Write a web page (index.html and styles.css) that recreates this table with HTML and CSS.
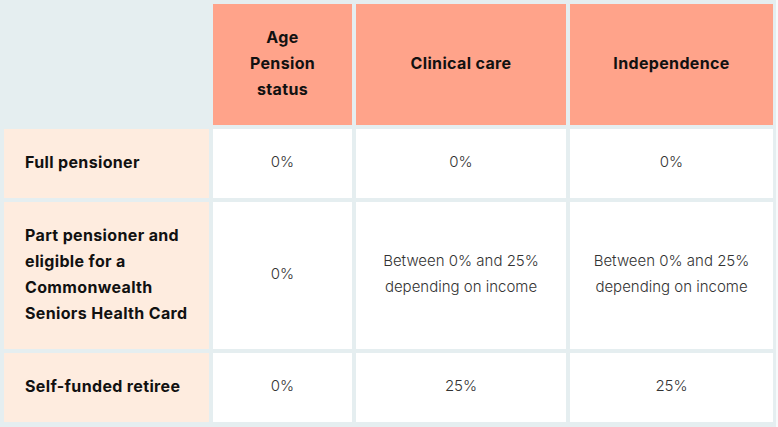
FILE: index.html
```html
<!DOCTYPE html>
<html lang="en">
<head>
<meta charset="utf-8">
<title>Aged care contributions</title>
<link rel="stylesheet" href="styles.css">
</head>
<body>
<div class="wrap">
  <table class="fees">
    <colgroup>
      <col class="c1">
      <col class="c2">
      <col class="c3">
      <col class="c4">
    </colgroup>
    <thead>
      <tr>
        <th class="blank"></th>
        <th class="head">Age Pension status</th>
        <th class="head">Clinical care</th>
        <th class="head">Independence</th>
      </tr>
    </thead>
    <tbody>
      <tr>
        <th class="label">Full pensioner</th>
        <td>0%</td>
        <td>0%</td>
        <td>0%</td>
      </tr>
      <tr>
        <th class="label">Part pensioner and eligible for a Commonwealth Seniors Health Card</th>
        <td>0%</td>
        <td>Between 0% and 25% depending on income</td>
        <td>Between 0% and 25% depending on income</td>
      </tr>
      <tr>
        <th class="label">Self-funded retiree</th>
        <td>0%</td>
        <td>25%</td>
        <td>25%</td>
      </tr>
    </tbody>
  </table>
</div>
</body>
</html>
```
FILE: styles.css
```css
html, body {
  margin: 0;
  padding: 0;
  background: #f7fafb;
}
.wrap {
  width: 776px;
  height: 427px;
  background: #e5eef0;
  overflow: hidden;
}
.fees {
  border-collapse: separate;
  border-spacing: 4px;
  table-layout: fixed;
  width: 777px;
  font-family: "Inter", "Liberation Sans", sans-serif;
  font-size: 15px;
  line-height: 26px;
  color: #333333;
}
.c1 { width: 205px; }
.c2 { width: 139px; }
.c3 { width: 210px; }
.c4 { width: 203px; }
.fees th, .fees td {
  padding: 20px 20px 23px;
  vertical-align: middle;
}
.fees td {
  background: #ffffff;
  text-align: center;
  font-weight: 300;
}
.fees .blank {
  background: transparent;
}
.fees .head {
  padding-left: 24px;
  padding-right: 24px;
  background: #ffa38a;
  color: #111111;
  font-weight: 700;
  font-size: 16px;
  letter-spacing: 0.35px;
  text-align: center;
}
.fees .label {
  padding-left: 21px;
  background: #feecdf;
  color: #111111;
  font-weight: 700;
  font-size: 16px;
  letter-spacing: 0.35px;
  text-align: left;
}
```
